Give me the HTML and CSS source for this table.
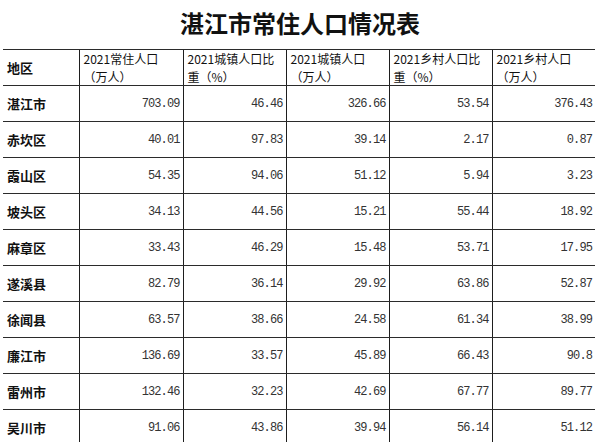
FILE: index.html
```html
<!DOCTYPE html>
<html lang="zh-CN">
<head>
<meta charset="utf-8">
<title>湛江市常住人口情况表</title>
<link rel="stylesheet" href="styles.css">
</head>
<body>
<div class="page">
  <h1 class="title">湛江市常住人口情况表</h1>
  <table class="pop">
    <colgroup>
      <col class="c-name">
      <col class="c-num1">
      <col class="c-num">
      <col class="c-num">
      <col class="c-num">
      <col class="c-num">
    </colgroup>
    <thead>
      <tr>
        <th class="name">地区</th>
        <th>2021常住人口<br>（万人）</th>
        <th>2021城镇人口比<br>重（%）</th>
        <th>2021城镇人口<br>（万人）</th>
        <th>2021乡村人口比<br>重（%）</th>
        <th>2021乡村人口<br>（万人）</th>
      </tr>
    </thead>
    <tbody>
      <tr><td class="name">湛江市</td><td>703.09</td><td>46.46</td><td>326.66</td><td>53.54</td><td>376.43</td></tr>
      <tr><td class="name">赤坎区</td><td>40.01</td><td>97.83</td><td>39.14</td><td>2.17</td><td>0.87</td></tr>
      <tr><td class="name">霞山区</td><td>54.35</td><td>94.06</td><td>51.12</td><td>5.94</td><td>3.23</td></tr>
      <tr><td class="name">坡头区</td><td>34.13</td><td>44.56</td><td>15.21</td><td>55.44</td><td>18.92</td></tr>
      <tr><td class="name">麻章区</td><td>33.43</td><td>46.29</td><td>15.48</td><td>53.71</td><td>17.95</td></tr>
      <tr><td class="name">遂溪县</td><td>82.79</td><td>36.14</td><td>29.92</td><td>63.86</td><td>52.87</td></tr>
      <tr><td class="name">徐闻县</td><td>63.57</td><td>38.66</td><td>24.58</td><td>61.34</td><td>38.99</td></tr>
      <tr><td class="name">廉江市</td><td>136.69</td><td>33.57</td><td>45.89</td><td>66.43</td><td>90.8</td></tr>
      <tr><td class="name">雷州市</td><td>132.46</td><td>32.23</td><td>42.69</td><td>67.77</td><td>89.77</td></tr>
      <tr><td class="name">吴川市</td><td>91.06</td><td>43.86</td><td>39.94</td><td>56.14</td><td>51.12</td></tr>
    </tbody>
  </table>
</div>
</body>
</html>
```

FILE: styles.css
```css
html, body {
  margin: 0;
  padding: 0;
  background: #ffffff;
}

.page {
  width: 600px;
  height: 442px;
  overflow: hidden;
  padding-left: 3px;
  box-sizing: border-box;
}

.title {
  margin: 0;
  height: 49px;
  box-sizing: border-box;
  padding-bottom: 4px;
  padding-right: 3px;
  line-height: 45px;
  text-align: center;
  font-family: "Noto Sans CJK SC", sans-serif;
  font-weight: 700;
  font-size: 24px;
  color: #111;
}

.pop {
  border-collapse: collapse;
  table-layout: fixed;
  width: 592px;
}

.c-name { width: 76px; }
.c-num1 { width: 104px; }
.c-num { width: 103px; }

.pop th,
.pop td {
  height: 35px;
  padding: 0;
  border-top: 1px solid #2b2b2b;
  border-bottom: 1px solid #2b2b2b;
  vertical-align: middle;
  overflow: hidden;
  white-space: nowrap;
}

.pop th + th,
.pop td + td {
  border-left: 1px solid #1e1e1e;
}

.pop th {
  text-align: left;
  padding-left: 4px;
  font-family: "Noto Sans CJK SC", sans-serif;
  font-weight: 400;
  font-size: 12px;
  line-height: 17.5px;
  color: #111;
}

.pop td {
  text-align: right;
  padding-right: 3px;
  font-family: "Liberation Mono", monospace;
  font-size: 12px;
  letter-spacing: -0.9px;
  color: #333;
}

.pop .name {
  text-align: left;
  padding-left: 4px;
  padding-right: 0;
  font-family: "Noto Sans CJK SC", sans-serif;
  font-weight: 700;
  font-size: 13px;
  letter-spacing: 0;
  color: #111;
}
```
